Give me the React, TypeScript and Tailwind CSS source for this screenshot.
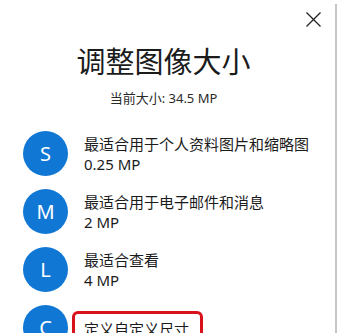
type SizeOption = {
  letter: string;
  title: string;
  size?: string;
};

const options: SizeOption[] = [
  { letter: "S", title: "最适合用于个人资料图片和缩略图", size: "0.25 MP" },
  { letter: "M", title: "最适合用于电子邮件和消息", size: "2 MP" },
  { letter: "L", title: "最适合查看", size: "4 MP" },
];

const font = {
  fontFamily: '"Segoe UI", "Noto Sans", "Noto Sans CJK SC", sans-serif',
};

function Avatar({ letter }: { letter: string }) {
  return (
    <div className="w-[45px] h-[45px] shrink-0 rounded-full bg-[#1078d4] text-white flex items-center justify-center text-[20px] leading-none">
      {letter}
    </div>
  );
}

export default function App() {
  return (
    <div
      className="flex w-[339px] h-[333px] overflow-hidden bg-white text-[#1b1b1b]"
      style={font}
    >
      <div className="w-[335px] shrink-0 flex flex-col pr-[8px]">
        {/* Header */}
        <div className="flex shrink-0 justify-end pt-[12px] pr-[6px] h-[42px]">
          <svg width="15" height="15" viewBox="0 0 15 15" className="text-[#222]">
            <path d="M0.5 0.5 L14.5 14.5 M14.5 0.5 L0.5 14.5" stroke="currentColor" strokeWidth="1.3" fill="none" />
          </svg>
        </div>

        <h1 className="shrink-0 text-center text-[29px] leading-[40px] font-normal">
          调整图像大小
        </h1>
        <p className="shrink-0 text-center text-[13px] leading-[18px] mt-[7px] text-[#2a2a2a]">
          当前大小: 34.5 MP
        </p>

        {/* Options */}
        <div className="shrink-0 flex flex-col gap-[13px] mt-[24px] pl-[23px]">
          {options.map((o) => (
            <div key={o.letter} className="flex items-center gap-[16px]">
              <Avatar letter={o.letter} />
              <div className="flex flex-col text-[15px] leading-[20px]">
                <span>{o.title}</span>
                <span>{o.size}</span>
              </div>
            </div>
          ))}
          <div className="flex items-start gap-[4px]">
            <Avatar letter="C" />
            <div className="mt-[6px] border-[3px] border-[#d8121a] rounded-[6px] w-[131px] pl-[9px] pt-[5px] pb-[6px] text-[15px] leading-[20px]">
              定义自定义尺寸
            </div>
          </div>
        </div>
      </div>
      <div className="w-[2px] mt-[4px] bg-[#c6c6c6]" />
    </div>
  );
}
